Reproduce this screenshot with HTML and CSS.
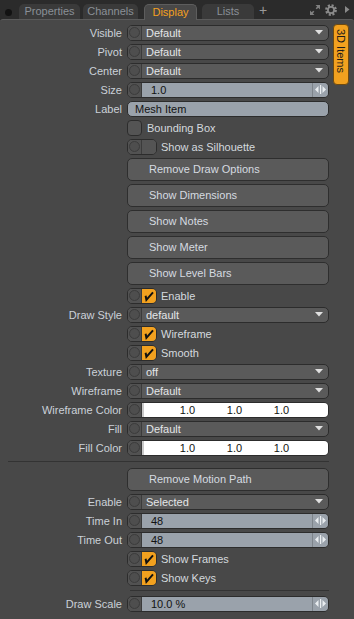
FILE: index.html
```html
<!DOCTYPE html>
<html>
<head>
<meta charset="utf-8">
<link rel="stylesheet" href="styles.css">
</head>
<body>
<div class="app">
  <div class="topbar">
    <span class="dot"></span>
    <div class="tab t-prop">Properties</div>
    <div class="tab t-chan">Channels</div>
    <div class="tab active t-disp">Display</div>
    <div class="tab t-list">Lists</div>
    <span class="plus">+</span>
    <div class="tools">
      <svg class="ic-exp" width="12" height="12" viewBox="0 0 12 12"><path d="M6.5 1H11V5.5Z M1 6.5V11H5.5Z" fill="#808080"/><path d="M10 2L7.2 4.8 M2 10L4.8 7.2" stroke="#808080" stroke-width="1.6"/></svg>
      <svg class="ic-gear" width="12" height="12" viewBox="0 0 12 12"><circle cx="6" cy="6" r="4.6" fill="none" stroke="#8a8a8a" stroke-width="2.6" stroke-dasharray="2 1.61"/><circle cx="6" cy="6" r="3.1" fill="none" stroke="#8a8a8a" stroke-width="1.8"/></svg>
      <svg class="ic-tri" width="5" height="7" viewBox="0 0 5 7"><path d="M0 0L4.5 3.5L0 7Z" fill="#8a8a8a"/></svg>
    </div>
  </div>
  <div class="panel">
    <div class="form">
      <div class="row"><span class="lbl">Visible</span><div class="dd"><span class="knob"></span><span class="val">Default</span><svg class="arrow" width="8" height="5" viewBox="0 0 8 5"><path d="M0 0H8L4 4.5Z" fill="#e0e0e0"/></svg></div></div>
      <div class="row"><span class="lbl">Pivot</span><div class="dd"><span class="knob"></span><span class="val">Default</span><svg class="arrow" width="8" height="5" viewBox="0 0 8 5"><path d="M0 0H8L4 4.5Z" fill="#e0e0e0"/></svg></div></div>
      <div class="row"><span class="lbl">Center</span><div class="dd"><span class="knob"></span><span class="val">Default</span><svg class="arrow" width="8" height="5" viewBox="0 0 8 5"><path d="M0 0H8L4 4.5Z" fill="#e0e0e0"/></svg></div></div>
      <div class="row"><span class="lbl">Size</span><div class="dd num"><span class="knob"></span><span class="nval">1.0</span><span class="spin"><svg width="11" height="9" viewBox="0 0 11 9"><path d="M0 4.5L3.5 1V8Z M11 4.5L7.5 1V8Z" fill="#e9edf0"/><rect x="5" y="0" width="1.2" height="9" fill="#e9edf0"/></svg></span></div></div>
      <div class="row"><span class="lbl">Label</span><div class="txt">Mesh Item</div></div>
      <div class="row"><div class="ctl chkline"><span class="sq"></span><span class="ctext sqtext">Bounding Box</span></div></div>
      <div class="row"><div class="ctl chkline"><span class="cb"><span class="knob"></span><span class="off"></span></span><span class="ctext">Show as Silhouette</span></div></div>
      <div class="brow"><div class="btn">Remove Draw Options</div></div>
      <div class="brow"><div class="btn">Show Dimensions</div></div>
      <div class="brow"><div class="btn">Show Notes</div></div>
      <div class="brow"><div class="btn">Show Meter</div></div>
      <div class="brow"><div class="btn">Show Level Bars</div></div>
      <div class="row"><div class="ctl chkline"><span class="cb"><span class="knob"></span><span class="on"><svg width="14" height="14" viewBox="0 0 14 14"><path d="M3.6 6.8L4.4 10.8L11 3.4" fill="none" stroke="#111" stroke-width="2"/></svg></span></span><span class="ctext">Enable</span></div></div>
      <div class="row"><span class="lbl">Draw Style</span><div class="dd"><span class="knob"></span><span class="val">default</span><svg class="arrow" width="8" height="5" viewBox="0 0 8 5"><path d="M0 0H8L4 4.5Z" fill="#e0e0e0"/></svg></div></div>
      <div class="row"><div class="ctl chkline"><span class="cb"><span class="knob"></span><span class="on"><svg width="14" height="14" viewBox="0 0 14 14"><path d="M3.6 6.8L4.4 10.8L11 3.4" fill="none" stroke="#111" stroke-width="2"/></svg></span></span><span class="ctext">Wireframe</span></div></div>
      <div class="row"><div class="ctl chkline"><span class="cb"><span class="knob"></span><span class="on"><svg width="14" height="14" viewBox="0 0 14 14"><path d="M3.6 6.8L4.4 10.8L11 3.4" fill="none" stroke="#111" stroke-width="2"/></svg></span></span><span class="ctext">Smooth</span></div></div>
      <div class="row"><span class="lbl">Texture</span><div class="dd"><span class="knob"></span><span class="val">off</span><svg class="arrow" width="8" height="5" viewBox="0 0 8 5"><path d="M0 0H8L4 4.5Z" fill="#e0e0e0"/></svg></div></div>
      <div class="row"><span class="lbl">Wireframe</span><div class="dd"><span class="knob"></span><span class="val">Default</span><svg class="arrow" width="8" height="5" viewBox="0 0 8 5"><path d="M0 0H8L4 4.5Z" fill="#e0e0e0"/></svg></div></div>
      <div class="row"><span class="lbl">Wireframe Color</span><div class="dd col"><span class="knob"></span><span class="cval"><span>1.0</span><span>1.0</span><span>1.0</span></span></div></div>
      <div class="row"><span class="lbl">Fill</span><div class="dd"><span class="knob"></span><span class="val">Default</span><svg class="arrow" width="8" height="5" viewBox="0 0 8 5"><path d="M0 0H8L4 4.5Z" fill="#e0e0e0"/></svg></div></div>
      <div class="row"><span class="lbl">Fill Color</span><div class="dd col"><span class="knob"></span><span class="cval"><span>1.0</span><span>1.0</span><span>1.0</span></span></div></div>
      <div class="sep sep-wide"><span class="line"></span></div>
      <div class="brow"><div class="btn">Remove Motion Path</div></div>
      <div class="row"><span class="lbl">Enable</span><div class="dd"><span class="knob"></span><span class="val">Selected</span><svg class="arrow" width="8" height="5" viewBox="0 0 8 5"><path d="M0 0H8L4 4.5Z" fill="#e0e0e0"/></svg></div></div>
      <div class="row"><span class="lbl">Time In</span><div class="dd num"><span class="knob"></span><span class="nval">48</span><span class="spin"><svg width="11" height="9" viewBox="0 0 11 9"><path d="M0 4.5L3.5 1V8Z M11 4.5L7.5 1V8Z" fill="#e9edf0"/><rect x="5" y="0" width="1.2" height="9" fill="#e9edf0"/></svg></span></div></div>
      <div class="row"><span class="lbl">Time Out</span><div class="dd num"><span class="knob"></span><span class="nval">48</span><span class="spin"><svg width="11" height="9" viewBox="0 0 11 9"><path d="M0 4.5L3.5 1V8Z M11 4.5L7.5 1V8Z" fill="#e9edf0"/><rect x="5" y="0" width="1.2" height="9" fill="#e9edf0"/></svg></span></div></div>
      <div class="row"><div class="ctl chkline"><span class="cb"><span class="knob"></span><span class="on"><svg width="14" height="14" viewBox="0 0 14 14"><path d="M3.6 6.8L4.4 10.8L11 3.4" fill="none" stroke="#111" stroke-width="2"/></svg></span></span><span class="ctext">Show Frames</span></div></div>
      <div class="row"><div class="ctl chkline"><span class="cb"><span class="knob"></span><span class="on"><svg width="14" height="14" viewBox="0 0 14 14"><path d="M3.6 6.8L4.4 10.8L11 3.4" fill="none" stroke="#111" stroke-width="2"/></svg></span></span><span class="ctext">Show Keys</span></div></div>
      <div class="sep sep-narrow"><span class="line"></span></div>
      <div class="row"><span class="lbl">Draw Scale</span><div class="dd num"><span class="knob"></span><span class="nval">10.0 %</span><span class="spin"><svg width="11" height="9" viewBox="0 0 11 9"><path d="M0 4.5L3.5 1V8Z M11 4.5L7.5 1V8Z" fill="#e9edf0"/><rect x="5" y="0" width="1.2" height="9" fill="#e9edf0"/></svg></span></div></div>
    </div>
    <div class="side">
      <div class="vtab">3D Items</div>
    </div>
  </div>
</div>
</body>
</html>
```
FILE: styles.css
```css
* { box-sizing: border-box; }
html, body { margin: 0; padding: 0; }
body {
  background: #2b2b2b;
  font-family: "Liberation Sans", Arial, sans-serif;
  font-size: 11px;
  width: 354px;
  height: 619px;
  overflow: hidden;
}
.app { display: flex; flex-direction: column; height: 619px; }

/* top bar */
.topbar {
  height: 19px;
  display: flex;
  align-items: flex-end;
  flex: none;
}
.dot {
  align-self: flex-start;
  width: 7px; height: 7px;
  margin: 9px 0 0 5px;
  border-radius: 50%;
  background: #121212;
}
.tab {
  height: 15px;
  line-height: 15px;
  text-align: center;
  color: #8a9097;
  background: #3a3a3a;
  border-radius: 5px 5px 0 0;
  font-size: 11px;
}
.t-prop { width: 61px; margin-left: 7px; }
.t-chan { width: 55px; margin-left: 3px; }
.t-disp { width: 53px; margin-left: 6px; }
.t-list { width: 52px; margin-left: 5px; }
.tab.active {
  background: #484848;
  color: #f4a020;
  border: 1px solid #5d5d5d;
  border-bottom: none;
  height: 16px;
  margin-bottom: -1px;
  line-height: 14px;
  position: relative;
  z-index: 1;
}
.plus {
  color: #9a9a9a;
  font-size: 14px;
  line-height: 16px;
  margin-left: 5px;
  align-self: center;
}
.tools {
  margin-left: auto;
  align-self: center;
  display: flex;
  align-items: center;
  padding-right: 4px;
}
.ic-exp { margin-right: 4px; }
.ic-gear { margin-right: 8px; }

/* panel */
.panel {
  flex: 1;
  display: flex;
  background: #484848;
  border-top: 1px solid #5b5b5b;
  border-radius: 3px 3px 0 0;
}
.form { width: 331px; padding-top: 3px; }
.side { flex: 1; padding-top: 4px; padding-left: 2px; }
.vtab {
  width: 16px;
  height: 61px;
  background: #f2a11f;
  border: 1px solid #6e4a10;
  border-radius: 4px;
  writing-mode: vertical-rl;
  color: #1b1b1b;
  font-size: 11px;
  line-height: 14px;
  padding-top: 4px;
}

/* rows */
.row {
  display: grid;
  grid-template-columns: 127px 202px;
  height: 19px;
  align-items: center;
}
.lbl {
  grid-column: 1;
  text-align: right;
  padding-right: 5px;
  color: #cbd1d8;
  white-space: nowrap;
}
.row > .dd, .row > .txt, .row > .ctl { grid-column: 2; }

.dd {
  height: 16px;
  display: flex;
  align-items: stretch;
  border: 1px solid #2c2c2c;
  border-radius: 5px;
  background: #5a5a5a;
  overflow: hidden;
}
.knob {
  width: 14px;
  flex: none;
  border-right: 1px solid #3b3b3b;
  background: #525252;
  display: flex;
  align-items: center;
  justify-content: center;
}
.knob::before {
  content: "";
  width: 9px; height: 9px;
  border-radius: 50%;
  border: 1px solid #3c3c3c;
  background: #4e4e4e;
}
.val {
  flex: 1;
  padding-left: 4px;
  color: #e4e6e8;
  line-height: 14px;
}
.arrow { align-self: center; margin-right: 5px; }

.nval {
  flex: 1;
  background: #9aa2ab;
  color: #121212;
  padding-left: 9px;
  line-height: 14px;
}
.spin {
  width: 16px;
  flex: none;
  background: #9aa2ab;
  border-left: 1px solid #7d848b;
  display: flex;
  align-items: center;
  justify-content: center;
}

.txt {
  height: 16px;
  border: 1px solid #2c2c2c;
  border-radius: 5px;
  background: #9aa2ab;
  color: #121212;
  padding-left: 7px;
  line-height: 14px;
}

.col .cval {
  flex: 1;
  background: #ffffff;
  border-left: 2px solid #c9c9c9;
  display: flex;
  padding-left: 20px;
  color: #121212;
  line-height: 14px;
}
.cval span { width: 47px; text-align: center; }

/* checkboxes */
.chkline { display: flex; align-items: center; height: 16px; }
.sq {
  width: 15px; height: 16px;
  border: 1px solid #2c2c2c;
  border-radius: 4px;
  background: #545454;
}
.cb {
  display: flex;
  width: 30px; height: 16px;
  border: 1px solid #2c2c2c;
  border-radius: 5px;
  overflow: hidden;
  background: #545454;
}
.cb .off { flex: 1; background: #545454; }
.cb .on {
  flex: 1;
  background: #f2a11f;
  display: flex;
  align-items: center;
  justify-content: center;
}
.ctext { color: #d4d9de; margin-left: 4px; }
.sqtext { margin-left: 5px; }

/* buttons */
.brow {
  display: grid;
  grid-template-columns: 127px 202px;
  height: 26px;
  align-items: center;
}
.btn {
  grid-column: 2;
  height: 23px;
  border: 1px solid #2e2e2e;
  border-radius: 5px;
  background: #5a5a5a;
  color: #d6dbe0;
  padding-left: 21px;
  line-height: 21px;
}

/* separators */
.sep { display: flex; align-items: center; }
.sep-wide { height: 9px; padding-left: 8px; }
.sep-narrow { height: 7px; padding-left: 130px; }
.line { width: 100%; max-width: 321px; height: 1px; background: #333333; }
.sep-narrow .line { max-width: 199px; }
```
